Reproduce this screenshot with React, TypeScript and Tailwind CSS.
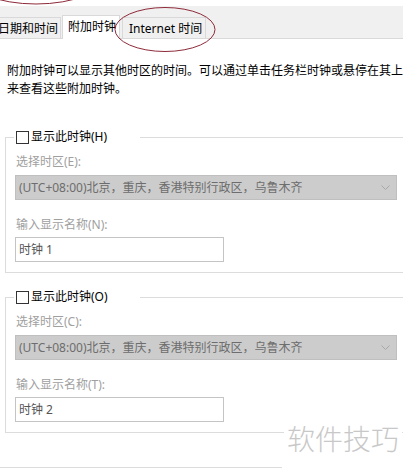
import React from 'react'

const font = "font-['Noto_Sans','Noto_Sans_CJK_SC',sans-serif]"

function Chevron() {
  return (
    <svg width="9" height="6" viewBox="0 0 9 6" className="shrink-0">
      <polyline points="0.5,0.5 4.5,4.5 8.5,0.5" fill="none" stroke="#a8a8a8" strokeWidth="1" />
    </svg>
  )
}

interface ClockGroupProps {
  checkLabel: string
  zoneLabel: string
  nameLabel: string
  name: string
  className?: string
}

function ClockGroup({ checkLabel, zoneLabel, nameLabel, name, className }: ClockGroupProps) {
  return (
    <fieldset
      className={`ml-[5px] w-[420px] border-t border-l border-b border-[#dcdcdc] pl-[9px] pb-[10px] m-0 ${className ?? ''}`}
    >
      <legend className="ml-[-1px] w-[126px] p-0">
        <div className="flex items-center h-[18px] pl-[2px]">
          <span className="block w-[13px] h-[13px] border border-[#333333] bg-white" />
          <span className="ml-[2px] text-black">{checkLabel}</span>
        </div>
      </legend>
      <div className="mt-[7px] ml-[1px] text-[#a0a0a0]">{zoneLabel}</div>
      <div className="mt-[4px] h-[25px] w-[382px] bg-[#cccccc] border border-[#bfbfbf] flex items-center justify-between pl-[3px] pr-[6px]">
        <span className="text-[#6d6d6d] whitespace-nowrap">(UTC+08:00)北京，重庆，香港特别行政区，乌鲁木齐</span>
        <Chevron />
      </div>
      <div className="mt-[16px] ml-[1px] text-[#a0a0a0]">{nameLabel}</div>
      <div className="mt-[3px] h-[25px] w-[209px] border border-[#c4c4c4] bg-white flex items-center pl-[3px] text-[#555555]">
        {name}
      </div>
    </fieldset>
  )
}

export default function App() {
  return (
    <div className={`relative w-[403px] h-[470px] overflow-hidden bg-white text-[12px] leading-[18px] text-black ${font}`}>
      {/* tab strip */}
      <div className="mt-[6px] h-[33px] bg-[#f0f0f0] border-b border-[#d9d9d9] flex items-end">
        <div className="ml-[-9px] w-[70px] h-[21px] border-t border-l border-r border-[#d9d9d9] bg-[#f0f0f0] flex items-center pl-[6px] pt-[1px] whitespace-nowrap">
          日期和时间
        </div>
        <div className="ml-[1px] w-[58px] h-[24px] mb-[-1px] border-t border-l border-r border-[#d9d9d9] bg-white flex items-center pl-[5px] pb-[2px] whitespace-nowrap">
          附加时钟
        </div>
        <div className="ml-[2px] w-[84px] h-[21px] border-t border-l border-r border-[#d9d9d9] bg-[#f0f0f0] flex items-center pl-[6px] pt-[1px] whitespace-nowrap">
          Internet 时间
        </div>
      </div>

      <p className="mt-[23px] px-[7px] whitespace-nowrap">
        附加时钟可以显示其他时区的时间。可以通过单击任务栏时钟或悬停在其上
        <br />
        来查看这些附加时钟。
      </p>

      <ClockGroup
        className="mt-[30px]"
        checkLabel="显示此时钟(H)"
        zoneLabel="选择时区(E):"
        nameLabel="输入显示名称(N):"
        name="时钟 1"
      />
      <ClockGroup
        className="mt-[15px]"
        checkLabel="显示此时钟(O)"
        zoneLabel="选择时区(C):"
        nameLabel="输入显示名称(T):"
        name="时钟 2"
      />

      <div className="mt-[34px] h-px w-[282px] bg-[#dcdcdc]" />

      {/* watermark */}
      <div className="absolute left-[284px] top-[421px] bg-white px-[3px] text-[28px] leading-[36px] text-[#c8c8c8] font-light whitespace-nowrap">
        软件技巧
      </div>

      {/* red annotation ellipses */}
      <svg className="absolute left-0 top-0 pointer-events-none" width="403" height="60">
        <ellipse cx="36" cy="-25" rx="70" ry="29" fill="none" stroke="#8e2a3a" strokeWidth="1" />
        <ellipse cx="165" cy="29.5" rx="50" ry="22" fill="none" stroke="#8e2a3a" strokeWidth="1" />
      </svg>
    </div>
  )
}
